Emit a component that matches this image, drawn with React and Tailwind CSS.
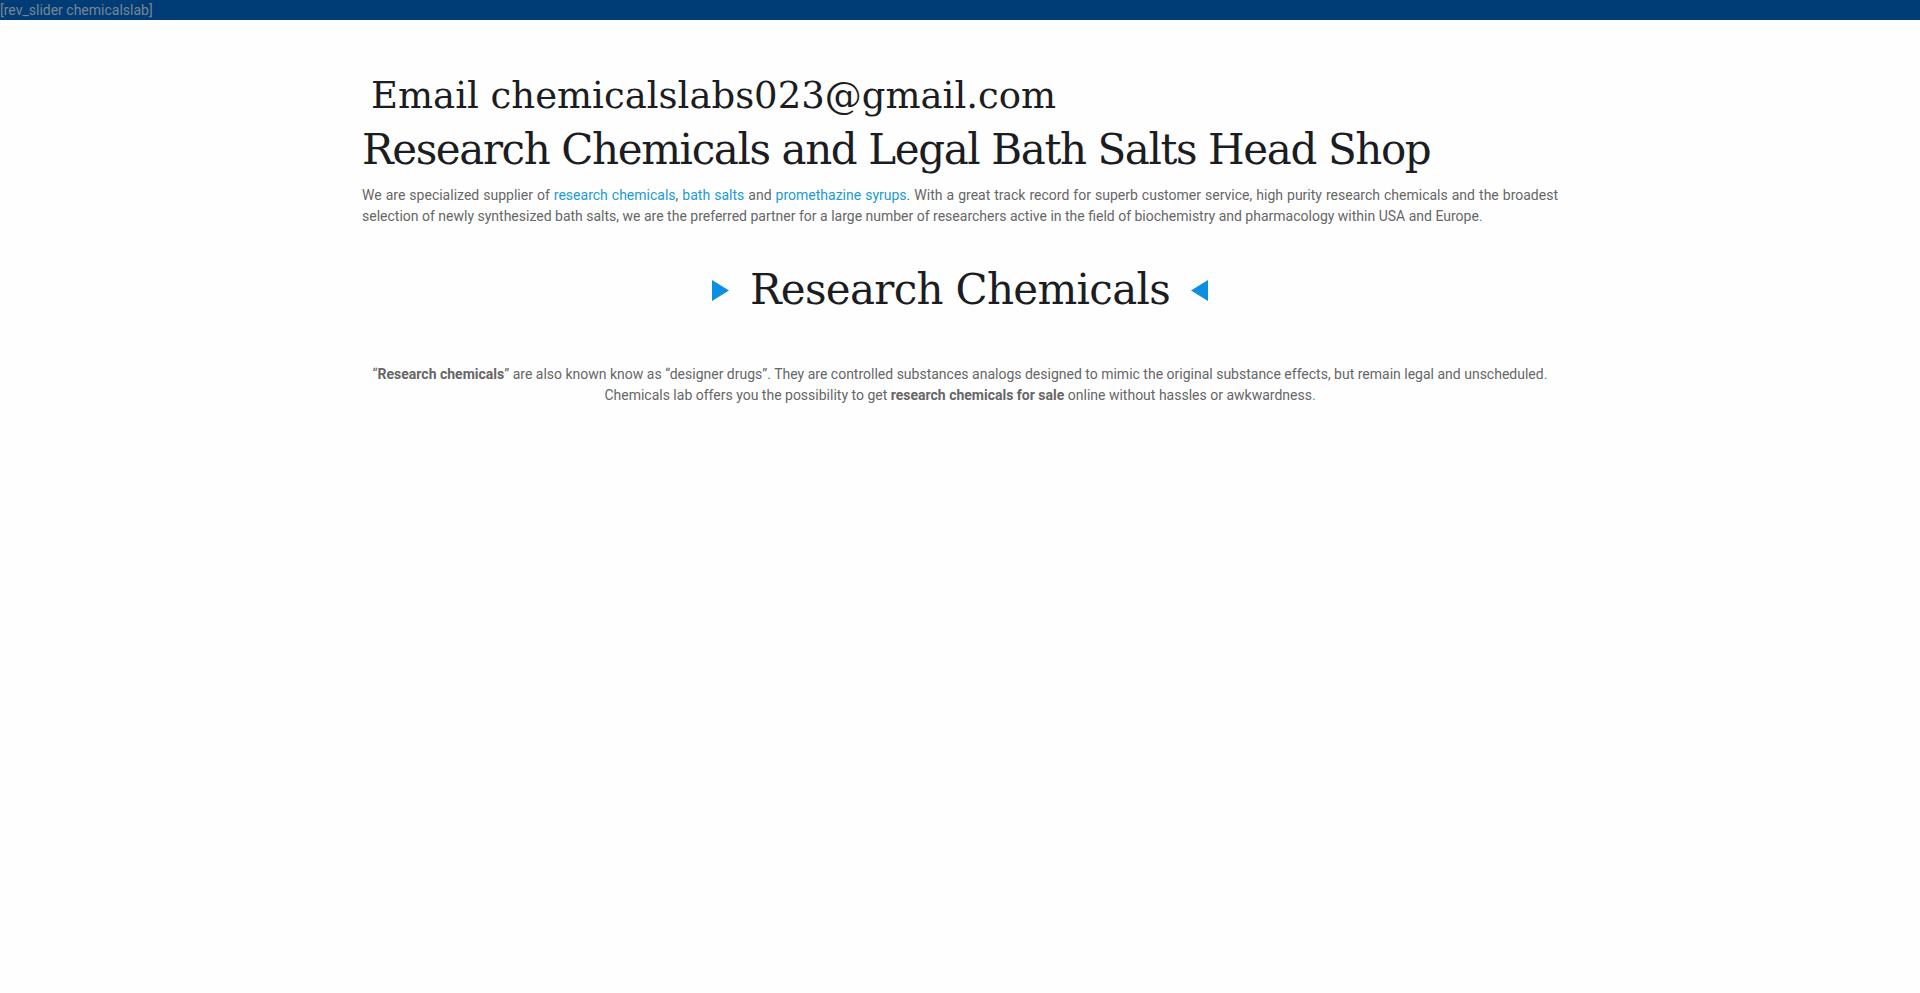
function Arrow({ dir }) {
  return (
    <svg width="17" height="21" viewBox="0 0 17 21" className="shrink-0">
      {dir === 'right' ? <polygon points="0,0 17,10.5 0,21" fill="#0a8fe2" /> : <polygon points="17,0 0,10.5 17,21" fill="#0a8fe2" />}
    </svg>
  );
}

export default function App() {
  return (
    <div className="min-h-[993px] bg-[#fefefe] font-['Roboto',sans-serif]">
      <div className="h-[20px] bg-[#003c76] text-[14px] leading-[20px] text-[#7a8694]">[rev_slider chemicalslab]</div>

      <div className="mx-auto w-[1196px] pt-[52px]">
        <h2 className="pl-[9px] font-['DejaVu_Serif',serif] text-[37px] leading-[48px] text-[#1b1d22]">
          Email chemicalslabs023@gmail.com
        </h2>
        <h1 className="mt-[2px] font-['DejaVu_Serif',serif] text-[42px] leading-[56px] tracking-[-1.4px] text-[#1b1d22]">
          Research Chemicals and Legal Bath Salts Head Shop
        </h1>
        <p className="mt-[7px] text-justify text-[14px] leading-[21px] text-[#666]">
          We are specialized supplier of <a className="text-[#1a9ad6]">research chemicals</a>,{' '}
          <a className="text-[#1a9ad6]">bath salts</a> and <a className="text-[#1a9ad6]">promethazine syrups</a>. With a
          great track record for superb customer service, high purity research chemicals and the broadest selection of
          newly synthesized bath salts, we are the preferred partner for a large number of researchers active in the
          field of biochemistry and pharmacology within USA and Europe<span className="text-[#1a9ad6]">.</span>
        </p>

        <div className="mt-[33px] flex items-center justify-center gap-[21px]">
          <Arrow dir="right" />
          <h2 className="font-['DejaVu_Serif',serif] text-[42px] leading-[60px] tracking-[-0.7px] text-[#1b1d22]">
            Research Chemicals
          </h2>
          <Arrow dir="left" />
        </div>

        <p className="mt-[44px] text-center text-[14px] leading-[21px] text-[#666]">
          “<b>Research chemicals</b>” are also known know as “designer drugs”. They are controlled substances analogs
          designed to mimic the original substance effects, but remain legal and unscheduled
          <span className="text-[#1a9ad6]">.</span>
          <br />
          Chemicals lab offers you the possibility to get <b>research chemicals for sale</b> online without hassles or
          awkwardness<span className="text-[#1a9ad6]">.</span>
        </p>
      </div>
    </div>
  );
}
